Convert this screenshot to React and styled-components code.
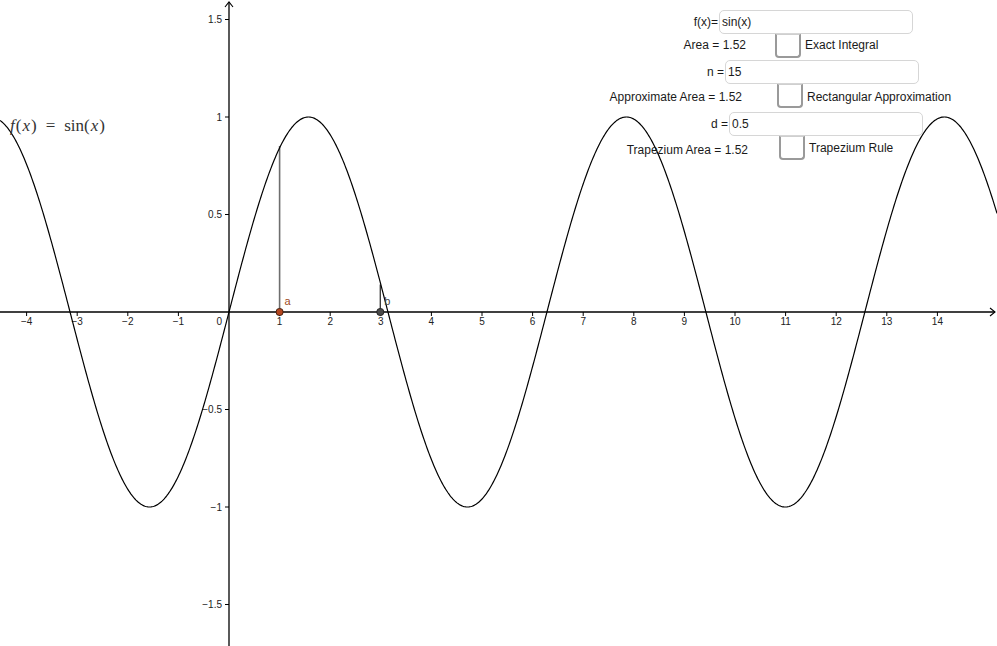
import React from "react";
import styled, { createGlobalStyle } from "styled-components";

const W = 997;
const H = 646;
const OX = 229;
const OY = 312;
const XS = 50.6;
const YS = 195;

const px = (x) => OX + x * XS;
const py = (y) => OY - y * YS;

const Global = createGlobalStyle`
  html, body { margin: 0; padding: 0; background: #ffffff; }
  body { font-family: "Liberation Sans", Arial, sans-serif; overflow: hidden; }
`;

const Stage = styled.div`
  position: relative;
  width: ${W}px;
  height: ${H}px;
  overflow: hidden;
  background: #ffffff;
`;

const Graph = styled.svg`
  display: block;
  width: ${W}px;
  height: ${H}px;
`;

const AxisLabel = styled.text`
  font-family: "Liberation Sans", Arial, sans-serif;
  font-size: 10px;
  fill: #222;
`;

const PointLabel = styled.text`
  font-family: "Liberation Sans", Arial, sans-serif;
  font-size: 11px;
  fill: ${(p) => p.$color};
`;

const FormulaLabel = styled.div`
  position: absolute;
  left: 9px;
  top: 116px;
  font-family: "Liberation Serif", "DejaVu Serif", serif;
  font-size: 17px;
  color: #333;
  white-space: nowrap;
  display: flex;
  gap: 9px;
  align-items: baseline;
`;

const Ital = styled.span`
  font-style: italic;
  padding: 0 1px;
`;

const Panel = styled.div`
  position: absolute;
  left: 600px;
  top: 10px;
  width: 380px;
  display: flex;
  flex-direction: column;
  font-family: "Liberation Sans", Arial, sans-serif;
  font-size: 12px;
  line-height: 14px;
  color: #1a1a1a;
`;

const Group = styled.div`
  display: flex;
  flex-direction: column;
`;

const InputRow = styled.div`
  display: grid;
  grid-template-columns: ${(p) => p.$labelCol}px 194px;
  align-items: center;
  height: 24px;
`;

const InputLabel = styled.span`
  text-align: right;
  padding-right: 1px;
  white-space: nowrap;
`;

const TextInput = styled.div`
  box-sizing: border-box;
  height: 24px;
  border: 1px solid #d6d6d6;
  border-radius: 5px;
  background: #fff;
  display: flex;
  align-items: center;
  padding-left: 2px;
`;

const CheckRow = styled.div`
  display: grid;
  grid-template-columns: ${(p) => p.$valueCol}px ${(p) => p.$boxGap}px 26px auto;
  align-items: start;
  height: ${(p) => p.$h}px;
`;

const ValueText = styled.span`
  text-align: right;
  white-space: nowrap;
  padding-top: ${(p) => p.$pt}px;
`;

const Box = styled.div`
  grid-column: 3;
  box-sizing: border-box;
  width: 26px;
  height: 24px;
  border: 2px solid #9a9a9a;
  border-top: 1px solid #cfcfcf;
  border-radius: 0 0 4px 4px;
  background: #fff;
`;

const CheckLabel = styled.span`
  white-space: nowrap;
  padding-left: 4px;
  padding-top: ${(p) => p.$pt}px;
`;

function sinPath() {
  let d = "";
  for (let X = 0; X <= W; X += 1) {
    const x = (X - OX) / XS;
    const Y = py(Math.sin(x));
    d += (X === 0 ? "M" : "L") + X + " " + Y.toFixed(2) + " ";
  }
  return d;
}

const minus = "\u2212";
const fmt = (n) => (n < 0 ? minus + Math.abs(n) : String(n));

const groups = [
  { label: "f(x)=", value: "sin(x)", labelCol: 119, valueText: "Area = 1.52", valueCol: 146, boxGap: 29, check: "Exact Integral", h: 26, pt: 4, cpt: 4 },
  { label: "n =", value: "15", labelCol: 125, valueText: "Approximate Area = 1.52", valueCol: 142, boxGap: 35, check: "Rectangular Approximation", h: 28, pt: 6, cpt: 6 },
  { label: "d =", value: "0.5", labelCol: 129, valueText: "Trapezium Area = 1.52", valueCol: 148, boxGap: 31, check: "Trapezium Rule", h: 26, pt: 7, cpt: 5 },
];

export default function App() {
  const xTicks = [];
  for (let i = -4; i <= 14; i++) if (i !== 0) xTicks.push(i);
  const yTicks = [-1.5, -1, -0.5, 0.5, 1, 1.5];

  return (
    <>
      <Global />
      <Stage>
        <Graph viewBox={`0 0 ${W} ${H}`} xmlns="http://www.w3.org/2000/svg">
          {/* axes */}
          <line x1="0" y1={OY} x2={W - 2} y2={OY} stroke="#000" strokeWidth="1.3" />
          <polyline points={`${W - 7},${OY - 4} ${W - 2},${OY} ${W - 7},${OY + 4}`} fill="none" stroke="#000" strokeWidth="1.1" />
          <line x1={OX} y1="2" x2={OX} y2={H} stroke="#000" strokeWidth="1.3" />
          <polyline points={`${OX - 4},7 ${OX},2 ${OX + 4},7`} fill="none" stroke="#000" strokeWidth="1.1" />

          {xTicks.map((i) => (
            <g key={"x" + i}>
              <line x1={px(i)} y1={OY} x2={px(i)} y2={OY + 4} stroke="#000" strokeWidth="1" />
              <AxisLabel x={px(i)} y={OY + 13} textAnchor="middle">
                {fmt(i)}
              </AxisLabel>
            </g>
          ))}
          <AxisLabel x={OX - 7} y={OY + 13} textAnchor="end">0</AxisLabel>

          {yTicks.map((v) => (
            <g key={"y" + v}>
              <line x1={OX - 4} y1={py(v)} x2={OX} y2={py(v)} stroke="#000" strokeWidth="1" />
              <AxisLabel x={OX - 7} y={py(v) + 3.5} textAnchor="end">
                {fmt(v)}
              </AxisLabel>
            </g>
          ))}

          {/* segments at a and b */}
          <line x1={px(1)} y1={OY} x2={px(1)} y2={py(Math.sin(1)) - 2} stroke="#6e6e6e" strokeWidth="1.6" />
          <line x1={px(2.99)} y1={OY} x2={px(2.99)} y2={py(Math.sin(3))} stroke="#333" strokeWidth="1.3" />

          {/* curve */}
          <path d={sinPath()} fill="none" stroke="#000" strokeWidth="1.2" />

          {/* points */}
          <circle cx={px(1)} cy={OY} r="3.6" fill="#b5461e" stroke="#3a1a0a" strokeWidth="0.9" />
          <PointLabel x={px(1) + 5} y={OY - 7} $color="#a04a22">a</PointLabel>
          <circle cx={px(2.99)} cy={OY} r="3.6" fill="#4a4a4a" stroke="#1e1e1e" strokeWidth="0.9" />
          <PointLabel x={px(2.99) + 4} y={OY - 7} $color="#444">b</PointLabel>
        </Graph>

        <FormulaLabel>
          <span>
            <Ital>f</Ital>(<Ital>x</Ital>)
          </span>
          <span>=</span>
          <span>
            sin(<Ital>x</Ital>)
          </span>
        </FormulaLabel>

        <Panel>
          {groups.map((g) => (
            <Group key={g.label}>
              <InputRow $labelCol={g.labelCol}>
                <InputLabel>{g.label}</InputLabel>
                <TextInput>{g.value}</TextInput>
              </InputRow>
              <CheckRow $valueCol={g.valueCol} $boxGap={g.boxGap} $h={g.h}>
                <ValueText $pt={g.pt}>{g.valueText}</ValueText>
                <Box />
                <CheckLabel $pt={g.cpt}>{g.check}</CheckLabel>
              </CheckRow>
            </Group>
          ))}
        </Panel>
      </Stage>
    </>
  );
}
